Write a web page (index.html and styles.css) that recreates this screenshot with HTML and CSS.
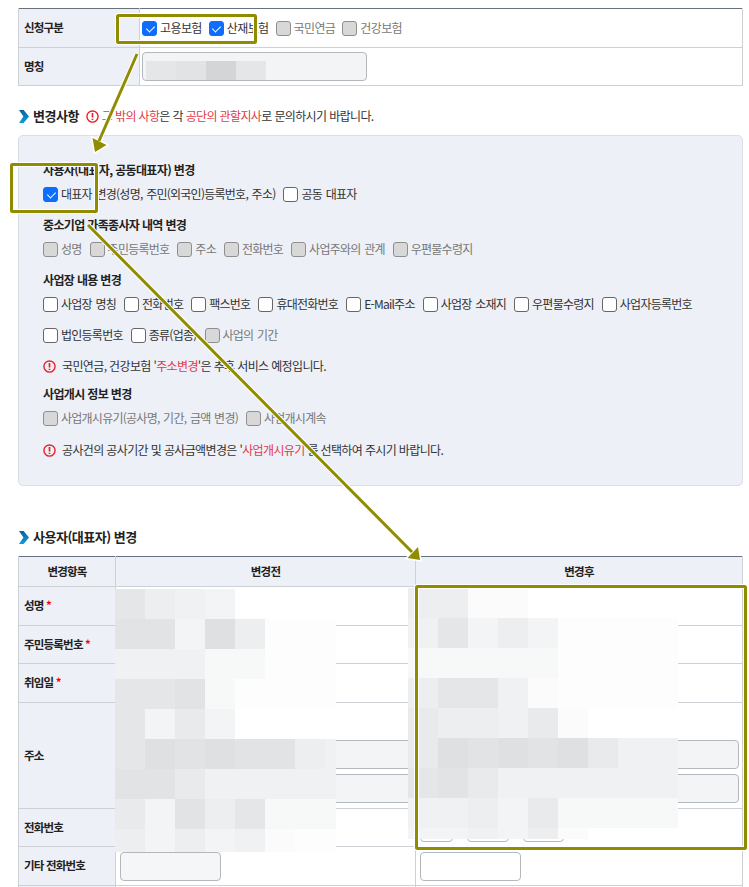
FILE: index.html
```html
<!DOCTYPE html>
<html lang="ko">
<head>
<meta charset="utf-8">
<title>변경사항</title>
<link rel="stylesheet" href="styles.css">
</head>
<body>
<main class="page">
  <table class="tbl top-tbl">
    <colgroup><col class="c-th1"><col></colgroup>
    <tr class="r39">
      <th>신청구분</th>
      <td class="tight-cell">
        <div class="checks">
          <label class="chk"><i class="box on"></i>고용보험</label>
          <label class="chk"><i class="box on"></i>산재보험</label>
          <label class="chk off"><i class="box dis"></i>국민연금</label>
          <label class="chk off"><i class="box dis"></i>건강보험</label>
        </div>
      </td>
    </tr>
    <tr class="r38">
      <th>명칭</th>
      <td class="tight-cell"><div class="field name-field"></div></td>
    </tr>
  </table>

  <h2 class="heading first">
    <svg class="chev" viewBox="0 0 10 13"><defs><linearGradient id="chevfill" x1="0" y1="0" x2="0" y2="1"><stop offset="0" stop-color="#0a5f9e"/><stop offset="1" stop-color="#0a9fe0"/></linearGradient></defs><path d="M0 0h4.600L10 6.500 4.600 13H0l4.400-6.500z" fill="url(#chevfill)"/></svg>
    변경사항
    <span class="note-inline">
      <svg class="alert" viewBox="0 0 14 14"><circle cx="7" cy="7" r="6" fill="none" stroke="#e8222c" stroke-width="1.5"/><path d="M7 3.200v4.800M7 9.400v1.400" stroke="#e8222c" stroke-width="1.8"/></svg>
      <span><em>그 밖의 사항</em>은 각 <em>공단의 관할지사</em>로 문의하시기 바랍니다.</span>
    </span>
  </h2>

  <section class="panel">
    <h3>사용자(대표자, 공동대표자) 변경</h3>
    <div class="checks row1">
      <label class="chk"><i class="box on"></i>대표자 변경(성명, 주민(외국인)등록번호, 주소)</label>
      <label class="chk"><i class="box"></i>공동 대표자</label>
    </div>
    <h3>중소기업 가족종사자 내역 변경</h3>
    <div class="checks row1">
      <label class="chk off"><i class="box dis"></i>성명</label>
      <label class="chk off"><i class="box dis"></i>주민등록번호</label>
      <label class="chk off"><i class="box dis"></i>주소</label>
      <label class="chk off"><i class="box dis"></i>전화번호</label>
      <label class="chk off"><i class="box dis"></i>사업주와의 관계</label>
      <label class="chk off"><i class="box dis"></i>우편물수령지</label>
    </div>
    <h3>사업장 내용 변경</h3>
    <div class="checks row1">
      <label class="chk"><i class="box"></i>사업장 명칭</label>
      <label class="chk"><i class="box"></i>전화번호</label>
      <label class="chk"><i class="box"></i>팩스번호</label>
      <label class="chk"><i class="box"></i>휴대전화번호</label>
      <label class="chk"><i class="box"></i>E-Mail주소</label>
      <label class="chk"><i class="box"></i>사업장 소재지</label>
      <label class="chk"><i class="box"></i>우편물수령지</label>
      <label class="chk"><i class="box"></i>사업자등록번호</label>
    </div>
    <div class="checks row2">
      <label class="chk"><i class="box"></i>법인등록번호</label>
      <label class="chk"><i class="box"></i>종류(업종)</label>
      <label class="chk off"><i class="box dis"></i>사업의 기간</label>
    </div>
    <p class="note">
      <svg class="alert" viewBox="0 0 14 14"><circle cx="7" cy="7" r="6" fill="none" stroke="#e8222c" stroke-width="1.5"/><path d="M7 3.200v4.800M7 9.400v1.400" stroke="#e8222c" stroke-width="1.8"/></svg>
      <span>국민연금, 건강보험 '<em>주소변경</em>'은 추후 서비스 예정입니다.</span>
    </p>
    <h3 class="tight">사업개시 정보 변경</h3>
    <div class="checks row1">
      <label class="chk off"><i class="box dis"></i>사업개시유기(공사명, 기간, 금액 변경)</label>
      <label class="chk off"><i class="box dis"></i>사업개시계속</label>
    </div>
    <p class="note last">
      <svg class="alert" viewBox="0 0 14 14"><circle cx="7" cy="7" r="6" fill="none" stroke="#e8222c" stroke-width="1.5"/><path d="M7 3.200v4.800M7 9.400v1.400" stroke="#e8222c" stroke-width="1.8"/></svg>
      <span>공사건의 공사기간 및 공사금액변경은 '<em>사업개시유기</em>'를 선택하여 주시기 바랍니다.</span>
    </p>
  </section>

  <h2 class="heading second">
    <svg class="chev" viewBox="0 0 10 13"><path d="M0 0h4.600L10 6.500 4.600 13H0l4.400-6.500z" fill="url(#chevfill)"/></svg>
    사용자(대표자) 변경
  </h2>

  <table class="tbl main-tbl">
    <colgroup><col class="c-th2"><col class="c-mid"><col></colgroup>
    <tr class="r30"><th class="ctr">변경항목</th><th class="ctr">변경전</th><th class="ctr">변경후</th></tr>
    <tr class="r39"><th>성명 <b>*</b></th><td></td><td></td></tr>
    <tr class="r38"><th>주민등록번호 <b>*</b></th><td></td><td></td></tr>
    <tr class="r39"><th>취임일 <b>*</b></th><td></td><td></td></tr>
    <tr class="r106"><th>주소</th>
      <td class="addr"><div class="field wide gray"></div><div class="field wide gray"></div></td>
      <td class="addr"><div class="field wide gray"></div><div class="field wide gray"></div></td>
    </tr>
    <tr class="r38"><th>전화번호</th>
      <td></td>
      <td><div class="phones"><div class="field p1"></div><div class="field p2"></div><div class="field p3"></div></div></td>
    </tr>
    <tr class="r39"><th>기타 전화번호</th>
      <td><div class="field etc gray-light"></div></td>
      <td><div class="field etc"></div></td>
    </tr>
    <tr class="r30"><th></th><td></td><td></td></tr>
  </table>

  <div class="mosaic name-mosaic"><i class="c"></i><i class="b"></i><i class="z"></i><i class="c"></i></div>

  <div class="mosaic left-mosaic">
    <i class="c"></i><i class="e"></i><i class="f"></i><i class="g"></i><i class="k"></i><i class="k"></i><i class="k"></i><i class="k"></i>
    <i class="b"></i><i class="b"></i><i class="g"></i><i class="a"></i><i class="e"></i><i class="j"></i><i class="j"></i><i class="j"></i>
    <i class="f"></i><i class="f"></i><i class="f"></i><i class="h"></i><i class="h"></i><i class="j"></i><i class="j"></i><i class="j"></i>
    <i class="c"></i><i class="c"></i><i class="b"></i><i class="h"></i><i class="j"></i><i class="j"></i><i class="j"></i><i class="j"></i>
    <i class="c"></i><i class="g"></i><i class="d"></i><i class="g"></i><i class="k"></i><i class="k"></i><i class="k"></i><i class="k"></i>
    <i class="c"></i><i class="a"></i><i class="b"></i><i class="a"></i><i class="b"></i><i class="b"></i><i class="e"></i><i class="f"></i>
    <i class="b"></i><i class="b"></i><i class="d"></i><i class="f"></i><i class="f"></i><i class="f"></i><i class="f"></i><i class="f"></i>
    <i class="d"></i><i class="g"></i><i class="b"></i><i class="e"></i><i class="c"></i><i class="h"></i><i class="h"></i><i class="h"></i>
    <i class="e"></i><i class="g"></i><i class="e"></i><i class="g"></i><i class="f"></i><i class="i"></i><i class="j"></i><i class="j"></i>
  </div>

  <div class="mosaic right-mosaic">
    <i class="e"></i><i class="e"></i><i class="i"></i><i class="i"></i><i class="k"></i><i class="k"></i><i class="k"></i><i class="k"></i><i class="k"></i>
    <i class="f"></i><i class="c"></i><i class="g"></i><i class="e"></i><i class="g"></i><i class="j"></i><i class="j"></i><i class="j"></i><i class="j"></i>
    <i class="h"></i><i class="h"></i><i class="h"></i><i class="h"></i><i class="h"></i><i class="j"></i><i class="j"></i><i class="j"></i><i class="j"></i>
    <i class="e"></i><i class="c"></i><i class="c"></i><i class="f"></i><i class="i"></i><i class="j"></i><i class="j"></i><i class="j"></i><i class="j"></i>
    <i class="d"></i><i class="e"></i><i class="e"></i><i class="f"></i><i class="d"></i><i class="i"></i><i class="k"></i><i class="k"></i><i class="k"></i>
    <i class="d"></i><i class="a"></i><i class="b"></i><i class="a"></i><i class="b"></i><i class="a"></i><i class="d"></i><i class="f"></i><i class="f"></i>
    <i class="c"></i><i class="b"></i><i class="d"></i><i class="f"></i><i class="f"></i><i class="f"></i><i class="f"></i><i class="f"></i><i class="f"></i>
    <i class="f"></i><i class="f"></i><i class="e"></i><i class="g"></i><i class="d"></i><i class="h"></i><i class="h"></i><i class="h"></i><i class="h"></i>
    <i class="g"></i><i class="g"></i><i class="f"></i><i class="g"></i><i class="e"></i><i class="i"></i>
  </div>

  <svg class="marks" viewBox="0 0 749 887" aria-hidden="true">
    <g class="halo">
      <rect x="117.500" y="15.500" width="138" height="27" rx="1"/>
      <rect x="11.500" y="164.500" width="85" height="47" rx="1"/>
      <rect x="416.500" y="586.500" width="329" height="262" rx="1"/>
      <path d="M137 54 99 141"/>
      <path d="M88 225 412 552"/>
    </g>
    <path class="halo-head" d="M95 152 92.500 138 106.500 145z"/>
    <path class="halo-head" d="M420 560 407.500 558 418 547z"/>
    <g class="olive">
      <rect x="117.500" y="15.500" width="138" height="27" rx="1"/>
      <rect x="11.500" y="164.500" width="85" height="47" rx="1"/>
      <rect x="416.500" y="586.500" width="329" height="262" rx="1"/>
      <path d="M137 54 99 141"/>
      <path d="M88 225 412 552"/>
    </g>
    <path class="olive-head" d="M95 152 92.500 138 106.500 145z"/>
    <path class="olive-head" d="M420 560 407.500 558 418 547z"/>
  </svg>
</main>
</body>
</html>
```

FILE: styles.css
```css
* { box-sizing: border-box; }
html, body { margin: 0; padding: 0; height: 887px; overflow: hidden; background: #fff; }
body {
  font-family: "Noto Sans CJK KR", "Noto Sans", sans-serif;
  font-size: 12px;
  color: #222;
  letter-spacing: -0.75px;
}
.page { position: relative; width: 749px; height: 887px; padding: 8px 6px 0 18px; overflow: hidden; }

.tbl { width: 725px; border-collapse: collapse; table-layout: fixed; border-top: 1px solid #67727e; }
.tbl th, .tbl td { border: 1px solid #cdd0d5; padding: 0; vertical-align: middle; }
.tbl tr:first-child th, .tbl tr:first-child td { border-top: 0; }
.tbl th { background: #edf0f6; font-weight: 700; text-align: left; padding: 0 0 2px 5px; color: #222; font-size: 11.5px; letter-spacing: -0.8px; }
.tbl th.ctr { text-align: center; padding-left: 0; }
.tbl th b { color: #f00; font-weight: 700; }
.tbl td { padding-left: 4px; }
.tbl td.tight-cell { padding-left: 2px; }
.tbl td.tight-cell .chk { margin-right: 7px; letter-spacing: -0.6px; }
.c-th1 { width: 121px; }
.c-th2 { width: 97px; }
.c-mid { width: 300px; }
.r30 { height: 30px; }
.r38 { height: 38px; }
.r39 { height: 39px; }
.r106 { height: 106px; }

.checks { display: flex; align-items: center; }
.chk { display: flex; align-items: center; gap: 3px; margin-right: 8px; color: #333; white-space: nowrap; line-height: 18px; word-spacing: 1px; }
.chk.off { color: #777; }
.box {
  width: 15px; height: 15px; border-radius: 3px;
  border: 1px solid #666; background: #fff; position: relative; flex: none;
}
.box.on { background: #0d6efd; border-color: #0d6efd; }
.box.on::after {
  content: ""; position: absolute; left: 4.500px; top: 2.500px; width: 4px; height: 7px;
  border: solid #fff; border-width: 0 1.2px 1.2px 0; transform: rotate(45deg);
}
.box.dis { background: #d8d8d8; border-color: #8f8f8f; }

.field { border: 1px solid #b3b8bf; border-radius: 4px; height: 29px; background: #fff; }
.name-field { width: 225px; background: #f3f4f6; }
.gray { background: #f3f4f6; }
.gray-light { background: #f5f6f8; }
.wide { width: calc(100% - 3px); }
.tbl td.addr { vertical-align: bottom; padding-bottom: 5px; }
.addr .field + .field { margin-top: 5px; }
.phones { display: flex; gap: 14px; }
.p1 { width: 33px; }
.p2 { width: 42px; }
.p3 { width: 41px; }
.etc { width: 101px; }

.heading { display: flex; align-items: center; gap: 4px; margin: 0; font-size: 13px; font-weight: 700; color: #222; line-height: 20px; letter-spacing: -0.5px; }
.heading.first { margin-top: 20px; }
.heading.second { margin-top: 41px; margin-bottom: 9px; }
.chev { width: 10px; height: 13px; margin-left: 1px; }
.note-inline { display: flex; align-items: center; gap: 3px; margin-left: 3px; font-size: 12px; font-weight: 400; letter-spacing: -0.63px; color: #333; }
em { font-style: normal; color: #e23a48; }
.alert { width: 13px; height: 13px; flex: none; }

.panel {
  margin-top: 9px; height: 351px; padding: 25px 24px 0;
  background: #edf0f6; border: 1px solid #d9dee7; border-radius: 5px;
}
.panel h3 { margin: 0; font-size: 12px; font-weight: 700; line-height: 18px; color: #222; letter-spacing: -0.65px; }
.row1 { margin: 6px 0 13px; }
.row2 { margin: 12px 0 0; }
.note { display: flex; align-items: center; gap: 6px; margin: 13px 0 0; line-height: 18px; color: #333; letter-spacing: -0.63px; }
.note.last { margin-top: 14px; }
.panel h3.tight { margin-top: 10px; }

.mosaic { position: absolute; display: grid; }
.mosaic i { display: block; }
.name-mosaic { left: 146px; top: 61px; grid-template-columns: repeat(4, 30px); grid-auto-rows: 19px; }
.left-mosaic { left: 115px; top: 589px; grid-template-columns: repeat(7, 30px) 11px; grid-template-rows: repeat(8, 30px) 23px; }
.right-mosaic { left: 408px; top: 588px; grid-template-columns: repeat(9, 30px); grid-template-rows: repeat(8, 30px) 11px; }
.a { background: #dfe0e2; }
.b { background: #e2e3e5; }
.c { background: #e5e6e7; }
.d { background: #e9eaec; }
.e { background: #edeef0; }
.f { background: #f0f1f3; }
.g { background: #f3f4f6; }
.h { background: #f7f8f8; }
.i { background: #fbfbfb; }
.j { background: #fdfdfd; }
.k { background: #fff; }
.z { background: #d4d5d6; }

.marks { position: absolute; left: 0; top: 0; width: 749px; height: 887px; pointer-events: none; }
.halo { fill: none; stroke: #fff; stroke-width: 5; }
.olive { fill: none; stroke: #8f8c00; stroke-width: 3; }
.halo-head { fill: #8f8c00; stroke: #fff; stroke-width: 3; }
.olive-head { fill: #8f8c00; }
```
